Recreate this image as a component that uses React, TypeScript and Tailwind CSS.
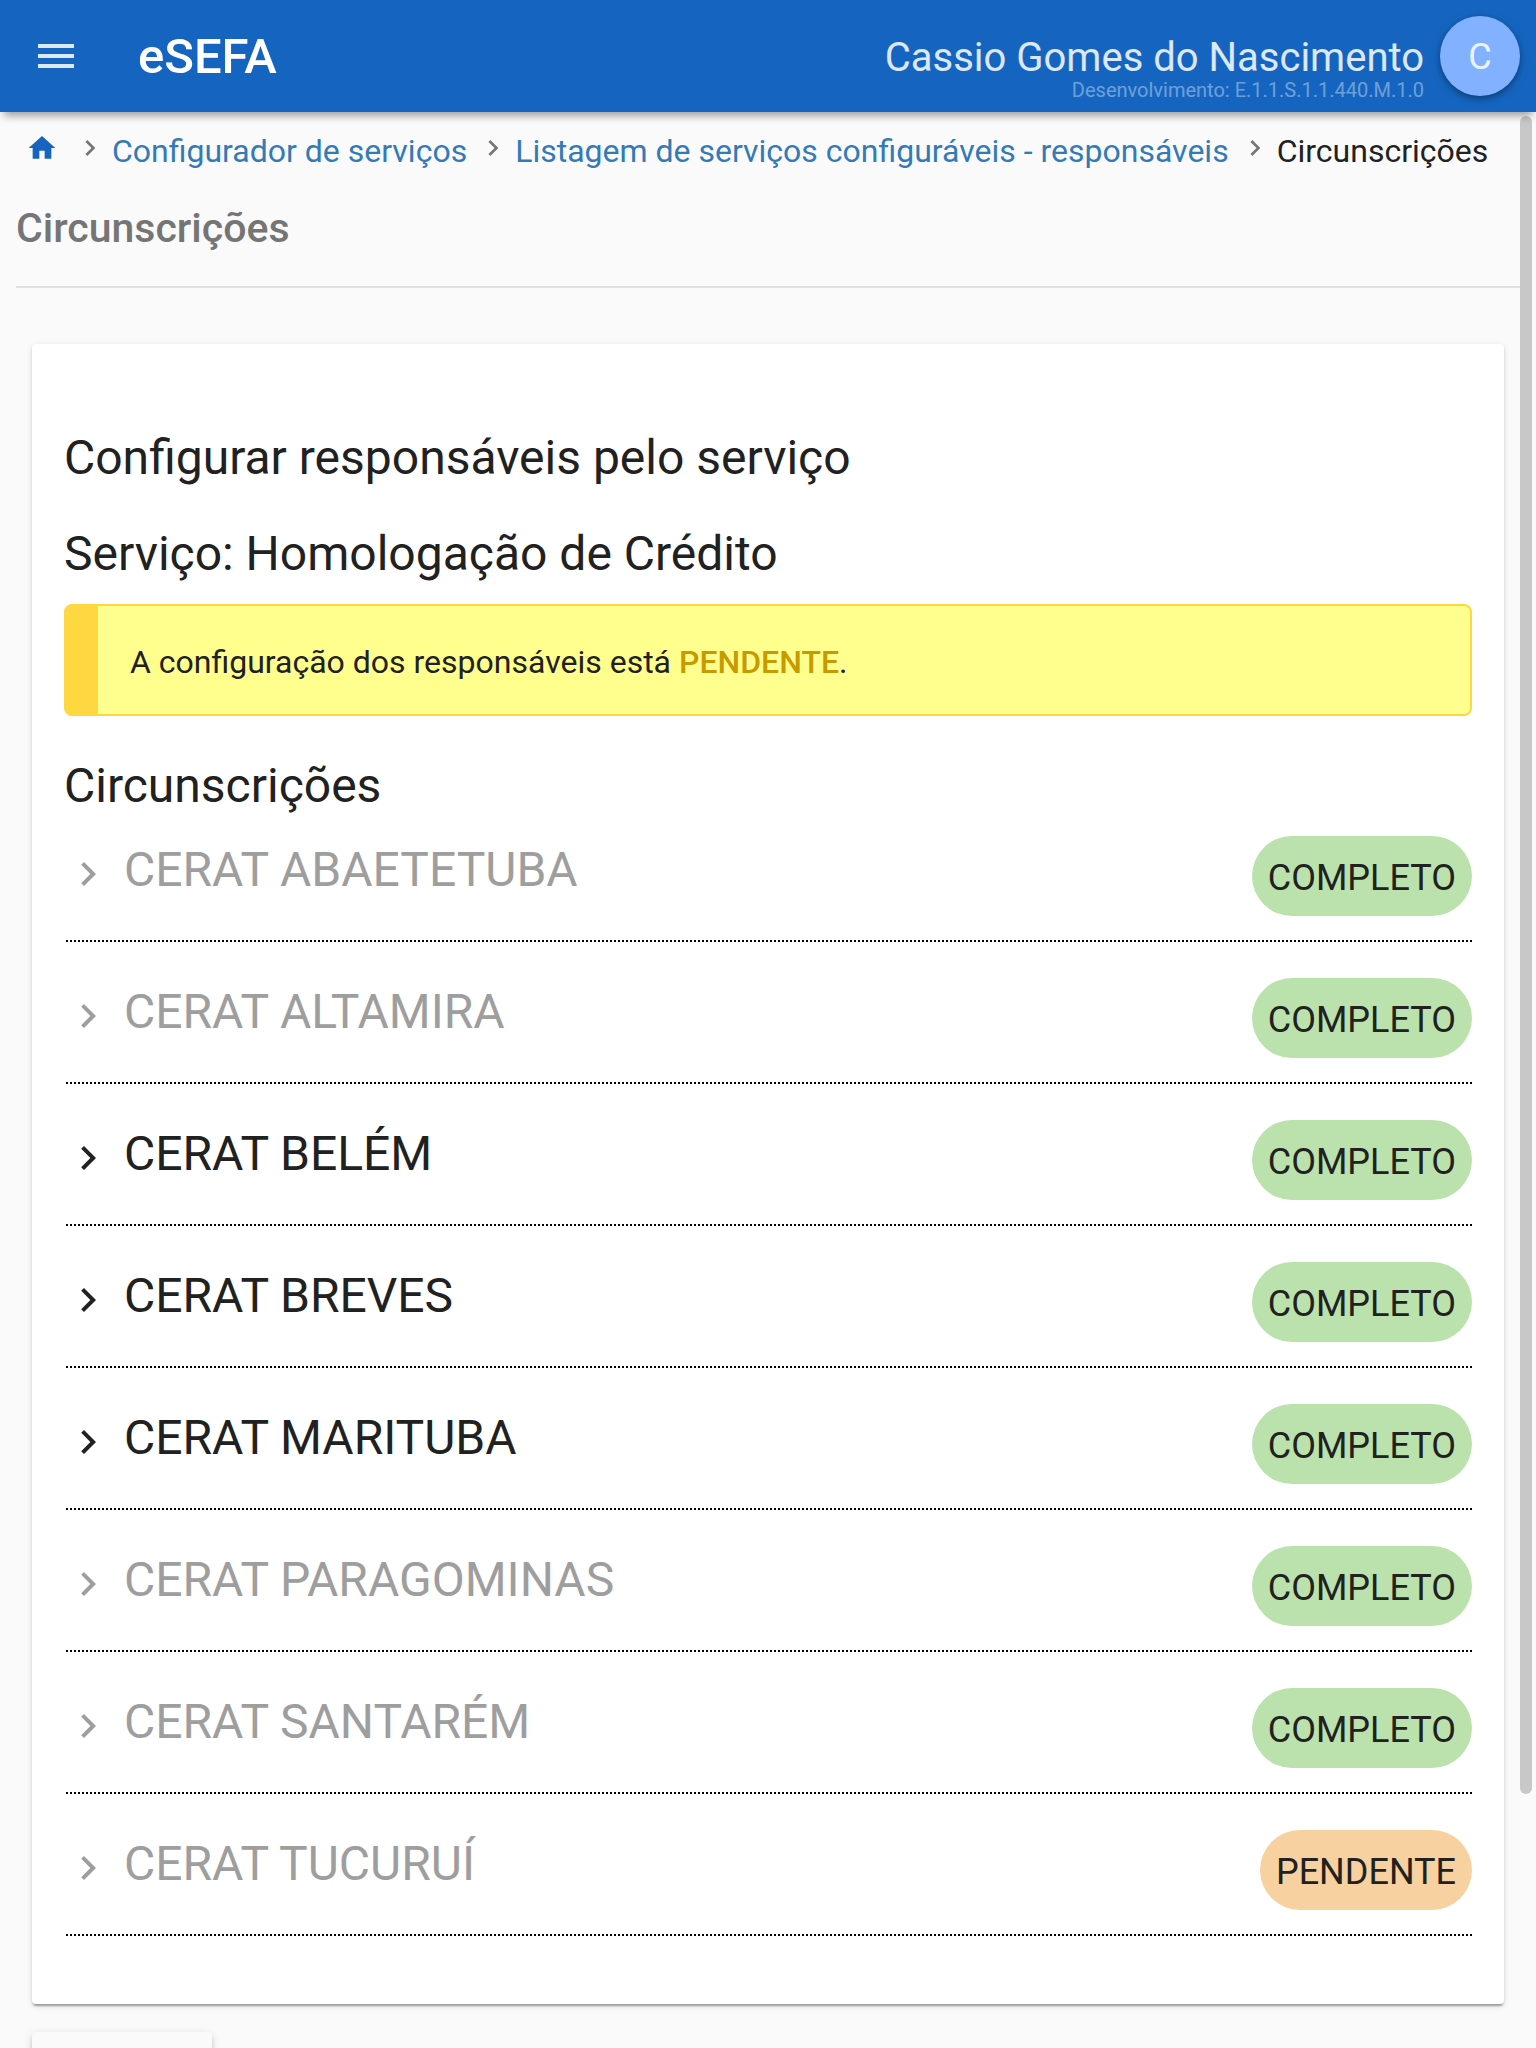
const circunscricoes = [
  { nome: 'CERAT ABAETETUBA', ativo: false, completo: true },
  { nome: 'CERAT ALTAMIRA', ativo: false, completo: true },
  { nome: 'CERAT BELÉM', ativo: true, completo: true },
  { nome: 'CERAT BREVES', ativo: true, completo: true },
  { nome: 'CERAT MARITUBA', ativo: true, completo: true },
  { nome: 'CERAT PARAGOMINAS', ativo: false, completo: true },
  { nome: 'CERAT SANTARÉM', ativo: false, completo: true },
  { nome: 'CERAT TUCURUÍ', ativo: false, completo: false },
];

function Chevron({ className }: { className: string }) {
  return (
    <svg viewBox="0 0 24 24" fill="currentColor" aria-hidden="true" className={className}>
      <path d="M8.59 16.59 13.17 12 8.59 7.41 10 6l6 6-6 6z" />
    </svg>
  );
}

function Header() {
  return (
    <header className="relative z-10 flex h-28 shrink-0 items-center bg-[#1565c0] pr-4 pl-8 shadow-[0_8px_8px_-4px_rgba(0,0,0,0.36)]">
      <button type="button" aria-label="Menu" className="text-white/85">
        <svg viewBox="0 0 24 24" fill="currentColor" className="size-12">
          <path d="M3 18h18v-2H3v2zm0-5h18v-2H3v2zm0-7v2h18V6H3z" />
        </svg>
      </button>
      <span className="ml-[58px] pt-0.5 text-[49px] leading-[56px] font-medium text-white">eSEFA</span>
      <div className="ml-auto flex h-full flex-col items-end justify-end pb-2.5">
        <span className="text-[40px] leading-10 text-white/85">Cassio Gomes do Nascimento</span>
        <span className="text-xl leading-6 text-white/40">Desenvolvimento: E.1.1.S.1.1.440.M.1.0</span>
      </div>
      <button
        type="button"
        aria-label="Conta"
        className="ml-4 size-20 rounded-full bg-[#82b1ff] pt-0.5 text-4xl text-white/85 shadow-[0_2px_10px_rgba(0,0,0,0.25),0_4px_5px_rgba(0,0,0,0.15)]"
      >
        C
      </button>
    </header>
  );
}

function Breadcrumb() {
  return (
    <nav aria-label="Trilha" className="flex items-start pt-5 pr-4 pl-[26px] text-[32px] leading-[38px] whitespace-nowrap text-[#337ab7]">
      <a href="#inicio" aria-label="Início" className="text-[#1565c0]">
        <svg viewBox="0 0 24 24" fill="currentColor" className="size-8">
          <path d="M10 20v-6h4v6h5v-8h3L12 3 2 12h3v8z" />
        </svg>
      </a>
      <Chevron className="mr-1.5 ml-4 size-8 shrink-0 text-[#757575]" />
      <a href="#configurador">Configurador de serviços</a>
      <Chevron className="mr-1.5 ml-2.5 size-8 shrink-0 text-[#757575]" />
      <a href="#listagem">Listagem de serviços configuráveis - responsáveis</a>
      <Chevron className="mr-1.5 ml-2.5 size-8 shrink-0 text-[#757575]" />
      <span aria-current="page" className="text-[#212121]">Circunscrições</span>
    </nav>
  );
}

export default function App() {
  return (
    <div className="flex h-screen flex-col overflow-hidden bg-[#fafafa] font-['Roboto',sans-serif] text-[#212121]">
      <Header />
      <main className="relative min-h-0 flex-1 overflow-hidden">
        <Breadcrumb />
        <div className="pr-4 pl-4">
          <h1 className="mt-[34px] border-b-2 border-[#e0e0e0] pb-[34px] text-[41px] leading-[48px] font-medium text-[#757575]">
            Circunscrições
          </h1>
          <section className="mx-4 mt-14 rounded-sm bg-white px-8 pt-[82px] pb-[68px] shadow-[0_4px_2px_-2px_rgba(0,0,0,0.2),0_2px_2px_0_rgba(0,0,0,0.14),0_2px_6px_0_rgba(0,0,0,0.12)]">
            <h2 className="text-5xl leading-[64px]">Configurar responsáveis pelo serviço</h2>
            <h2 className="mt-8 text-5xl leading-[64px]">Serviço: Homologação de Crédito</h2>
            <div
              role="status"
              className="mt-[18px] rounded-lg border-2 border-l-[34px] border-[#ffd740] bg-[#ffff8d] px-8 pt-[34px] pb-[30px] text-[32px] leading-[44px]"
            >
              A configuração dos responsáveis está <strong className="font-medium text-[#c79a00]">PENDENTE</strong>.
            </div>
            <h2 className="mt-[38px] text-5xl leading-[64px]">Circunscrições</h2>
            <ul className="mt-[18px] flex flex-col gap-9">
              {circunscricoes.map((c) => (
                <li key={c.nome}>
                  <div className="flex items-start justify-between pb-6">
                    <button
                      type="button"
                      disabled={!c.ativo}
                      className="flex items-start text-5xl leading-[68px] disabled:text-[#9e9e9e]"
                    >
                      <Chevron className="mt-3.5 mr-3 size-12" />
                      {c.nome}
                    </button>
                    <span
                      className={`rounded-[40px] px-4 pt-1 text-4xl leading-[76px] ${c.completo ? 'bg-[#bbe2ac]' : 'bg-[#f7d19f]'}`}
                    >
                      {c.completo ? 'COMPLETO' : 'PENDENTE'}
                    </span>
                  </div>
                  <hr className="ml-0.5 border-t-2 border-dotted border-black" />
                </li>
              ))}
            </ul>
          </section>
          <button
            type="button"
            aria-label="Voltar"
            className="mt-7 ml-4 block h-18 w-[180px] rounded-sm bg-[#fafafa] shadow-[0_6px_2px_-4px_rgba(0,0,0,0.2),0_4px_4px_0_rgba(0,0,0,0.14),0_2px_10px_0_rgba(0,0,0,0.12)]"
          />
        </div>
        <div aria-hidden="true" className="absolute top-1 right-1 h-[calc(100%-258px)] w-3 rounded-full bg-[#c8c8c8]" />
      </main>
    </div>
  );
}
